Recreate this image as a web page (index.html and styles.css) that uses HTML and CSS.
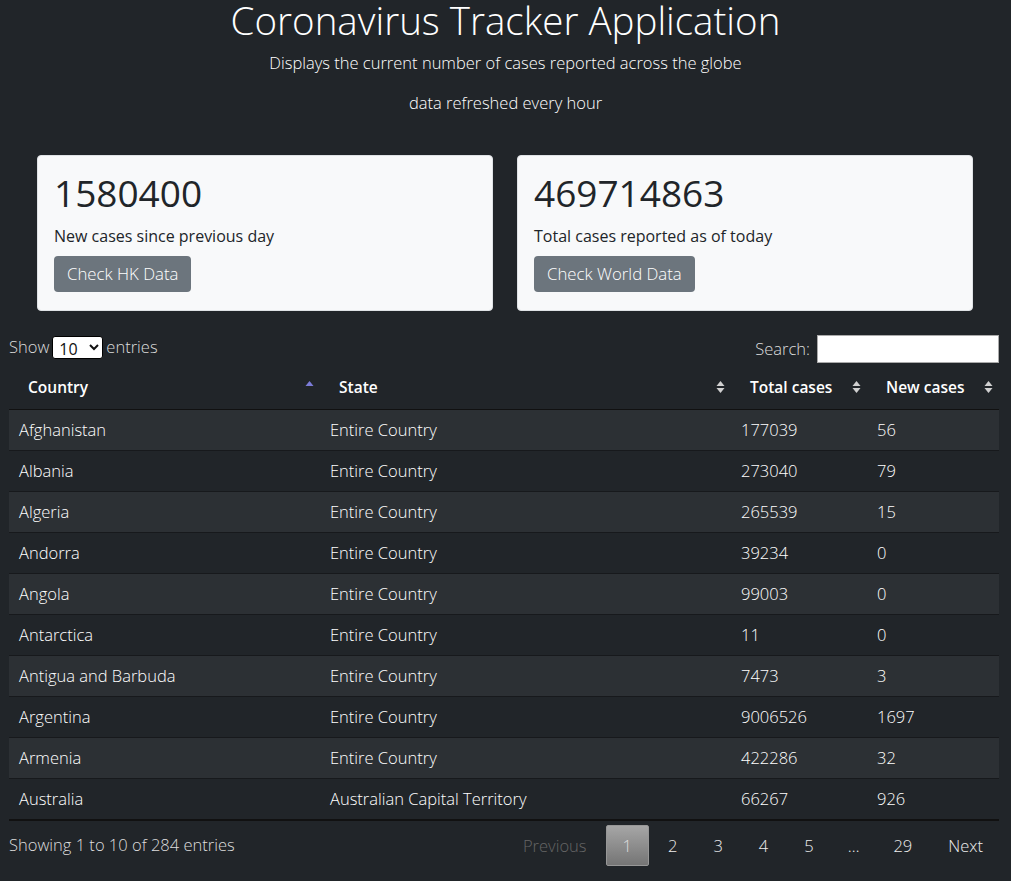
FILE: index.html
```html
<!DOCTYPE html>
<html lang="en">
<head>
<meta charset="utf-8">
<title>Coronavirus Tracker Application</title>
<link rel="stylesheet" href="styles.css">
</head>
<body>
<header class="hero">
  <h1 class="hero-title">Coronavirus Tracker Application</h1>
  <p class="hero-sub">Displays the current number of cases reported across the globe</p>
  <p class="hero-sub">data refreshed every hour</p>
</header>

<section class="cards">
  <div class="card">
    <div class="card-num">1580400</div>
    <p class="card-text">New cases since previous day</p>
    <a class="btn" href="#">Check HK Data</a>
  </div>
  <div class="card">
    <div class="card-num">469714863</div>
    <p class="card-text">Total cases reported as of today</p>
    <a class="btn" href="#">Check World Data</a>
  </div>
</section>

<section class="dt">
  <div class="dt-top">
    <label class="dt-length">Show <select class="dt-select"><option>10</option><option>25</option><option>50</option><option>100</option></select> entries</label>
    <label class="dt-search">Search: <input class="dt-input" type="search"></label>
  </div>
  <table class="dt-table">
    <colgroup>
      <col class="c1"><col class="c2"><col class="c3"><col class="c4">
    </colgroup>
    <thead>
      <tr>
        <th class="sort-asc">Country</th>
        <th class="sort-both">State</th>
        <th class="sort-both">Total cases</th>
        <th class="sort-both">New cases</th>
      </tr>
    </thead>
    <tbody>
      <tr><td>Afghanistan</td><td>Entire Country</td><td>177039</td><td>56</td></tr>
      <tr><td>Albania</td><td>Entire Country</td><td>273040</td><td>79</td></tr>
      <tr><td>Algeria</td><td>Entire Country</td><td>265539</td><td>15</td></tr>
      <tr><td>Andorra</td><td>Entire Country</td><td>39234</td><td>0</td></tr>
      <tr><td>Angola</td><td>Entire Country</td><td>99003</td><td>0</td></tr>
      <tr><td>Antarctica</td><td>Entire Country</td><td>11</td><td>0</td></tr>
      <tr><td>Antigua and Barbuda</td><td>Entire Country</td><td>7473</td><td>3</td></tr>
      <tr><td>Argentina</td><td>Entire Country</td><td>9006526</td><td>1697</td></tr>
      <tr><td>Armenia</td><td>Entire Country</td><td>422286</td><td>32</td></tr>
      <tr><td>Australia</td><td>Australian Capital Territory</td><td>66267</td><td>926</td></tr>
    </tbody>
  </table>
  <div class="dt-bottom">
    <div class="dt-info">Showing 1 to 10 of 284 entries</div>
    <div class="dt-pages">
      <span class="pg disabled">Previous</span>
      <span class="pg current">1</span>
      <span class="pg">2</span>
      <span class="pg">3</span>
      <span class="pg">4</span>
      <span class="pg">5</span>
      <span class="pg ellipsis">…</span>
      <span class="pg">29</span>
      <span class="pg">Next</span>
    </div>
  </div>
</section>
</body>
</html>
```

FILE: styles.css
```css
* { box-sizing: border-box; }

html, body {
  margin: 0;
  padding: 0;
  background: #212529;
}

body {
  font-family: "Open Sans", "Segoe UI", "Liberation Sans", sans-serif;
  font-size: 16.5px;
  line-height: 24px;
  color: #fff;
  font-weight: 300;
}

.hero {
  text-align: center;
  padding-top: 1px;
}

.hero-title {
  margin: 0;
  font-size: 38.5px;
  line-height: 38px;
  font-weight: 300;
}

.hero-sub {
  margin: 12px 0 16px;
  font-size: 16.5px;
  line-height: 24px;
}

.hero-sub + .hero-sub {
  margin-top: 0;
}

.cards {
  display: grid;
  grid-template-columns: 456px 456px;
  gap: 24px;
  width: 936px;
  margin: 40px 0 0 37px;
}

.card {
  background: #f8f9fa;
  border: 1px solid #dfe2e5;
  border-radius: 4px;
  padding: 16px;
  color: #212529;
  height: 156px;
}

.card-num {
  font-size: 37px;
  line-height: 42px;
  font-weight: 400;
}

.card-text {
  margin: 10px 0 8px;
  font-size: 16px;
  line-height: 24px;
  font-weight: 400;
}

.btn {
  display: inline-block;
  background: #6c757d;
  color: #fff;
  text-decoration: none;
  border-radius: 4px;
  padding: 6px 13px;
  font-size: 16.8px;
  line-height: 24px;
  font-weight: 300;
}

.dt {
  margin: 24px 12px 0 9px;
}

.dt-top {
  display: flex;
  justify-content: space-between;
  align-items: flex-start;
  color: #ddd;
  height: 30px;
}

.dt-length {
  display: flex;
  align-items: center;
  gap: 3px;
  line-height: 24px;
}

.dt-select {
  width: 51px;
  height: 23px;
  font-family: "Open Sans", "Liberation Sans", sans-serif;
  font-size: 16px;
  border: 1px solid #000;
  border-radius: 3px;
  background: #fff;
  color: #111;
  padding: 0 2px;
}

.dt-search {
  display: flex;
  align-items: center;
  gap: 7px;
}

.dt-input {
  width: 182px;
  height: 28px;
  border: 1px solid #aaa;
  background: #fff;
  padding: 0 4px;
}

.dt-table {
  width: 990px;
  border-collapse: collapse;
  table-layout: fixed;
}

.c1 { width: 311px; }
.c2 { width: 411px; }
.c3 { width: 136px; }
.c4 { width: 132px; }

.dt-table th {
  position: relative;
  text-align: left;
  font-size: 15.5px;
  font-weight: 600;
  padding: 10px 18px 10px 19px;
  line-height: 24px;
  border-bottom: 1px solid #111;
  white-space: nowrap;
}

.dt-table th::after {
  content: "";
  position: absolute;
  right: 6px;
  top: 50%;
  width: 9px;
  height: 14px;
  margin-top: -7px;
  background-repeat: no-repeat;
  background-position: center;
}

.dt-table th.sort-asc::after {
  background-image: url("data:image/svg+xml,%3Csvg xmlns='http://www.w3.org/2000/svg' width='9' height='14'%3E%3Cpolygon points='0.5,6 4.5,1 8.5,6' fill='%237c7cd8'/%3E%3C/svg%3E");
}

.dt-table th.sort-both::after {
  background-image: url("data:image/svg+xml,%3Csvg xmlns='http://www.w3.org/2000/svg' width='9' height='14'%3E%3Cpolygon points='0.5,6 4.5,1 8.5,6' fill='%23d0d0d0'/%3E%3Cpolygon points='0.5,8 8.5,8 4.5,13' fill='%23d0d0d0'/%3E%3C/svg%3E");
}

.dt-table td {
  padding: 8px 10px;
  line-height: 24px;
  border-top: 1px solid #17191c;
  white-space: nowrap;
}

.dt-table tbody tr:nth-child(odd) {
  background: #2c3034;
}

.dt-table tbody tr:last-child td {
  border-bottom: 2px solid #111;
}

.dt-bottom {
  display: flex;
  justify-content: space-between;
  align-items: flex-start;
}

.dt-info {
  padding-top: 12px;
  color: #ddd;
}

.dt-pages {
  display: flex;
  padding-top: 4px;
  margin-right: -1px;
}

.pg {
  display: inline-block;
  padding: 8px 16px;
  min-width: 24px;
  margin-left: 2px;
  border: 1px solid transparent;
  border-radius: 2px;
  text-align: center;
  color: #eee;
  line-height: 23px;
}

.pg.ellipsis {
  padding: 8px 14px;
}

.pg.disabled {
  color: #666;
}

.pg.current {
  color: #ddd;
  background: linear-gradient(to bottom, #a6a6a6 0%, #757575 100%);
  border-color: #979797;
}
```
